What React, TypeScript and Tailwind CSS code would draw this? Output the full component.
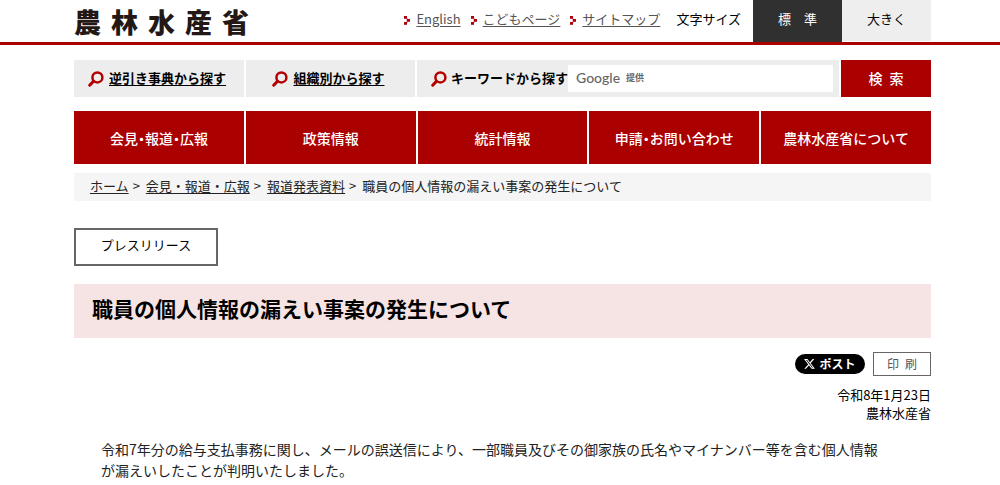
import { useState } from "react";

interface LinkItem {
  label: string;
  href: string;
}

const headerLinks: LinkItem[] = [
  { label: "English", href: "#english" },
  { label: "こどもページ", href: "#kids" },
  { label: "サイトマップ", href: "#sitemap" },
];

const navItems: LinkItem[] = [
  { label: "会見・報道・広報", href: "#press" },
  { label: "政策情報", href: "#policy" },
  { label: "統計情報", href: "#statistics" },
  { label: "申請・お問い合わせ", href: "#contact" },
  { label: "農林水産省について", href: "#about" },
];

const breadcrumbs: LinkItem[] = [
  { label: "ホーム", href: "#home" },
  { label: "会見・報道・広報", href: "#press" },
  { label: "報道発表資料", href: "#releases" },
];

const LOGO = "農林水産省";

const ArrowIcon = () => (
  <svg width="6" height="9" viewBox="0 0 6 9" fill="#b0000c" className="mt-[2px] shrink-0" aria-hidden="true">
    <rect x="0" y="0" width="3" height="2.8" />
    <rect x="3" y="3" width="3" height="2.8" />
    <rect x="0" y="6" width="3" height="2.8" />
    <rect x="2" y="2" width="2" height="5" opacity="0.25" />
  </svg>
);

const SearchIcon = () => (
  <svg width="16" height="16" viewBox="0 0 16 16" fill="none" stroke="#b40000" className="shrink-0" aria-hidden="true">
    <circle cx="9.4" cy="6.4" r="5" strokeWidth="2.5" />
    <path d="M5.4 10.4 1.7 14.2" strokeWidth="3" strokeLinecap="round" />
  </svg>
);

const XIcon = () => (
  <svg width="11" height="10" viewBox="0 0 24 22" fill="#fff" className="shrink-0" aria-hidden="true">
    <path d="M18.9 0h3.7l-8 9.2L24 21.7h-7.4l-5.8-7.6-6.6 7.6H.5l8.6-9.8L0 0h7.6l5.2 6.9L18.9 0Zm-1.3 19.5h2L6.5 2.1H4.3l13.3 17.4Z" />
  </svg>
);

const Header = () => {
  const [size, setSize] = useState("standard");

  return (
    <header className="flex h-[45px] justify-between border-b-[3px] border-[#aa0000] pr-[69px] pl-[74px]">
      <a href="#home" className="flex h-[42px] items-center gap-[10px] text-[27px] leading-none font-black text-[#231815]">
        {LOGO.split("").map((c) => (
          <span key={c}>{c}</span>
        ))}
      </a>
      <div className="flex">
        <ul className="flex h-[38px] items-center gap-[10px] text-[#555]">
          {headerLinks.map((link) => (
            <li key={link.label} className="flex items-center gap-[6px]">
              <ArrowIcon />
              <a href={link.href} className="underline underline-offset-2">
                {link.label}
              </a>
            </li>
          ))}
        </ul>
        <span className="flex h-[38px] items-center pr-3 pl-4">文字サイズ</span>
        <button
          onClick={() => setSize("standard")}
          aria-pressed={size === "standard"}
          className="w-[89px] bg-[#303030] pb-1 text-white"
        >
          標　準
        </button>
        <button
          onClick={() => setSize("large")}
          aria-pressed={size === "large"}
          className="h-[41px] w-[89px] bg-[#eeeeee] pb-[3px]"
        >
          大きく
        </button>
      </div>
    </header>
  );
};

const SearchBar = () => {
  const [keyword, setKeyword] = useState("");

  return (
    <form className="flex h-[37px] gap-[2px] font-bold" onSubmit={(e) => e.preventDefault()}>
      <a href="#dictionary" className="flex w-[170px] shrink-0 items-center gap-[5px] bg-[#ededed] pl-[14px]">
        <SearchIcon />
        <span className="pb-[2px] underline underline-offset-2">逆引き事典から探す</span>
      </a>
      <a href="#organization" className="flex w-[169px] shrink-0 items-center justify-center gap-[5px] bg-[#ededed] pr-1">
        <SearchIcon />
        <span className="pb-[2px] underline underline-offset-2">組織別から探す</span>
      </a>
      <div className="flex min-w-0 flex-1 items-center bg-[#ededed] pr-[6px] pl-[14px]">
        <SearchIcon />
        <label htmlFor="keyword" className="shrink-0 pb-[2px] pl-1">
          キーワードから探す
        </label>
        <div className="flex h-[27px] min-w-0 flex-1 items-center bg-white pb-[2px] pl-2 text-[#666]">
          <span className="font-[Lato,sans-serif] text-[14px] leading-none font-medium">Google</span>
          <span className="pl-[6px] text-[9px] leading-none">提供</span>
          <input
            id="keyword"
            type="text"
            value={keyword}
            onChange={(e) => setKeyword(e.target.value)}
            className="h-full min-w-0 flex-1 px-2 font-normal text-black outline-none"
          />
        </div>
      </div>
      <button type="submit" className="w-[90px] shrink-0 bg-[#aa0000] pb-[2px] text-[14px] font-medium text-white">
        検&ensp;索
      </button>
    </form>
  );
};

const App: React.FC = () => {
  return (
    <div className="min-h-screen bg-white font-['Noto_Sans_CJK_JP',sans-serif] text-[13px] leading-[18px] text-black">
      <Header />
      <div className="pt-[15px] pr-[69px] pl-[74px]">
        <SearchBar />

        <nav className="mt-[14px] grid grid-cols-5 gap-[2px] text-[14px] font-medium text-white [font-feature-settings:'halt']">
          {navItems.map((item) => (
            <a key={item.label} href={item.href} className="flex h-[53px] items-center justify-center bg-[#aa0000]">
              {item.label}
            </a>
          ))}
        </nav>

        <ol className="mt-[9px] flex h-7 items-center gap-[6px] bg-[#f5f5f5] px-4 pb-[2px] text-[#222]">
          {breadcrumbs.map((item) => (
            <li key={item.label} className="flex gap-1">
              <a href={item.href} className="underline underline-offset-2">
                {item.label}
              </a>
              <span>&gt;</span>
            </li>
          ))}
          <li>職員の個人情報の漏えい事案の発生について</li>
        </ol>

        <main>
          <p className="mt-[27px] flex h-[38px] w-36 items-center justify-center border-2 border-[#666] pb-1">
            プレスリリース
          </p>

          <h1 className="mt-[18px] flex h-[54px] items-center bg-[#f6e4e4] px-[18px] pb-[6px] text-[21px] font-bold">
            職員の個人情報の漏えい事案の発生について
          </h1>

          <div className="mt-[14px] flex items-center justify-end gap-2">
            <button className="flex h-5 w-[70px] items-center justify-center gap-1 rounded-full bg-black text-[12px] font-bold text-white">
              <XIcon />
              ポスト
            </button>
            <button className="h-6 w-[58px] border border-[#666] text-[12px] text-[#555]">印&ensp;刷</button>
          </div>

          <p className="mt-[10px] text-right">
            令和8年1月23日
            <br />
            農林水産省
          </p>

          <p className="mt-[17px] pr-10 pl-[27px] text-[14px] leading-[21px] text-[#222]">
            令和7年分の給与支払事務に関し、メールの誤送信により、一部職員及びその御家族の氏名やマイナンバー等を含む個人情報が漏えいしたことが判明いたしました。
          </p>
        </main>
      </div>
    </div>
  );
};

export default App;
